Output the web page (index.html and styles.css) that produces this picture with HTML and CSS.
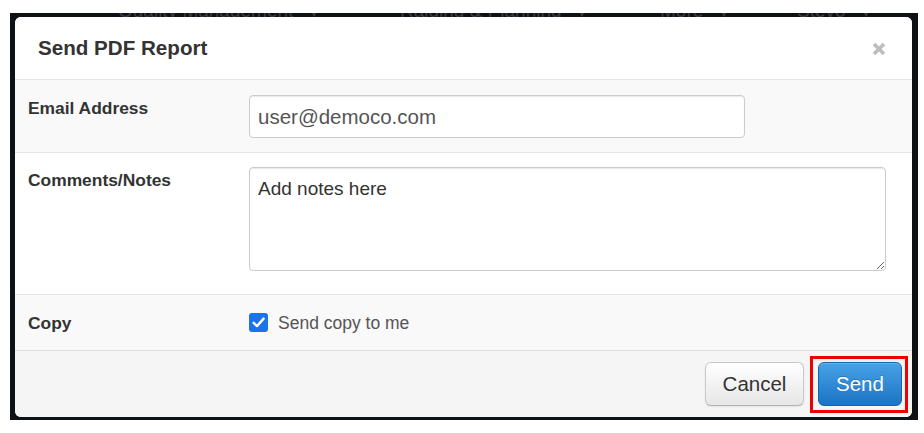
FILE: index.html
```html
<!DOCTYPE html>
<html lang="en">
<head>
<meta charset="utf-8">
<title>Send PDF Report</title>
<link rel="stylesheet" href="styles.css">
</head>
<body>
<div class="stage">
  <div class="nav-strip">
    <div class="nav-line">
      <span class="nav-item n1">Quality Management <span class="caret">▾</span></span>
      <span class="nav-item n2">Raiding &amp; Planning <span class="caret">▾</span></span>
      <span class="nav-item n3">More <span class="caret">▾</span></span>
      <span class="nav-item n4">Stevo <span class="caret">▾</span></span>
    </div>
  </div>
  <div class="modal">
    <div class="modal-header">
      <h3 class="modal-title">Send PDF Report</h3>
      <span class="close" aria-label="Close">
        <svg width="14" height="14" viewBox="0 0 14 14"><path d="M2 2 L12 12 M12 2 L2 12" stroke="#bdbdbd" stroke-width="3.6" stroke-linecap="butt"/></svg>
      </span>
    </div>
    <div class="row row-email">
      <label class="field-label">Email Address</label>
      <div class="control"><input class="text-input" type="text" value="user@democo.com"></div>
    </div>
    <div class="row row-notes">
      <label class="field-label">Comments/Notes</label>
      <div class="control"><textarea class="notes">Add notes here</textarea></div>
    </div>
    <div class="row row-copy">
      <label class="field-label">Copy</label>
      <div class="control check-line">
        <span class="checkbox">
          <svg width="19" height="19" viewBox="0 0 19 19"><path d="M4.6 9.8 L8 13.1 L14.6 5.6" fill="none" stroke="#fff" stroke-width="2.4" stroke-linecap="round" stroke-linejoin="round"/></svg>
        </span>
        <span class="check-text">Send copy to me</span>
      </div>
    </div>
    <div class="modal-footer">
      <button class="btn btn-cancel" type="button">Cancel</button>
      <span class="highlight"><button class="btn btn-send" type="button">Send</button></span>
    </div>
  </div>
</div>
</body>
</html>
```
FILE: styles.css
```css
* { box-sizing: border-box; }
html, body { margin: 0; padding: 0; background: #ffffff; }
body {
  font-family: "Liberation Sans", Arial, Helvetica, sans-serif;
  width: 924px;
  height: 433px;
  overflow: hidden;
}
.stage {
  margin: 13px 6px 0 10px;
  width: 908px;
  height: 407px;
  background: #0e1216;
  padding: 0 6px 3px 5px;
  display: flex;
  flex-direction: column;
}
.nav-strip {
  height: 4px;
  overflow: hidden;
  flex: none;
}
.nav-line {
  position: relative;
  height: 22px;
  margin-top: -13px;
  font-size: 19px;
  line-height: 22px;
  color: #3a3d42;
  white-space: nowrap;
}
.nav-item { position: absolute; top: 0; }
.caret { font-size: 12px; margin-left: 12px; }
.n1 { left: 103px; }
.n2 { left: 385px; }
.n3 { left: 645px; }
.n4 { left: 782px; }

.modal {
  flex: none;
  width: 897px;
  height: 400px;
  background: #fff;
  border-radius: 6px;
  overflow: hidden;
  display: flex;
  flex-direction: column;
}
.modal-header {
  height: 63px;
  padding: 19px 26px 0 23px;
  border-bottom: 1px solid #e5e5e5;
  display: flex;
  justify-content: space-between;
  background: #fff;
}
.modal-title {
  margin: 0;
  font-size: 20.6px;
  line-height: 24px;
  font-weight: bold;
  color: #333;
}
.close {
  display: flex;
  margin-top: 6px;
  width: 14px;
  height: 14px;
}
.row {
  display: grid;
  grid-template-columns: 221px 1fr;
  padding: 15px 26px 0 13px;
}
.row-email { height: 72px; background: #f9f9f9; }
.row-notes { height: 142px; background: #fff; border-top: 1px solid #e5e5e5; padding-top: 14px; }
.row-copy {
  height: 56px;
  background: #f9f9f9;
  border-top: 1px solid #e5e5e5;
  padding-top: 0;
  align-items: center;
}
.field-label {
  font-size: 17.4px;
  line-height: 20px;
  font-weight: bold;
  color: #333;
  margin-top: 3px;
}
.row-copy .field-label { margin-top: 0; }
.text-input {
  display: block;
  width: 496px;
  height: 43px;
  border: 1px solid #cccccc;
  border-radius: 4px;
  box-shadow: inset 0 1px 1px rgba(0,0,0,0.09);
  background: #fff;
  padding: 0 8px;
  font-family: "Liberation Sans", Arial, Helvetica, sans-serif;
  font-size: 20.5px;
  color: #555;
  outline: none;
}
.notes {
  display: block;
  width: 637px;
  height: 104px;
  border: 1px solid #cccccc;
  border-radius: 4px;
  box-shadow: inset 0 1px 1px rgba(0,0,0,0.09);
  background: #fff;
  padding: 9px 8px;
  font-family: "Liberation Sans", Arial, Helvetica, sans-serif;
  font-size: 19px;
  line-height: 24px;
  color: #333;
  outline: none;
  resize: both;
}
.check-line {
  display: flex;
  align-items: center;
  gap: 10px;
}
.checkbox {
  display: flex;
  width: 19px;
  height: 19px;
  background: #1a73e8;
  border-radius: 3px;
}
.check-text {
  font-size: 17.5px;
  color: #555;
  line-height: 20px;
}
.modal-footer {
  flex: 1;
  background: #f5f5f5;
  border-top: 1px solid #dddddd;
  display: flex;
  justify-content: flex-end;
  align-items: center;
  padding-right: 4px;
  gap: 6px;
}
.btn {
  display: block;
  height: 44px;
  border-radius: 6px;
  font-family: "Liberation Sans", Arial, Helvetica, sans-serif;
  font-size: 20.5px;
  padding: 0;
  cursor: pointer;
}
.btn-cancel {
  width: 99px;
  color: #333;
  background: linear-gradient(#ffffff, #e6e6e6);
  border: 1px solid #c8c8c8;
  border-bottom-color: #b3b3b3;
  box-shadow: inset 0 1px 0 rgba(255,255,255,0.4), 0 1px 2px rgba(0,0,0,0.08);
}
.highlight {
  display: block;
  border: 3px solid #ee0000;
  padding: 3px 3px 4px 5px;
}
.btn-send {
  width: 84px;
  color: #fff;
  background: linear-gradient(#48a2e6, #1b73c4);
  border: 1px solid #1a62a6;
  text-shadow: 0 -1px 0 rgba(0,0,0,0.2);
  box-shadow: inset 0 1px 0 rgba(255,255,255,0.2);
}
```
